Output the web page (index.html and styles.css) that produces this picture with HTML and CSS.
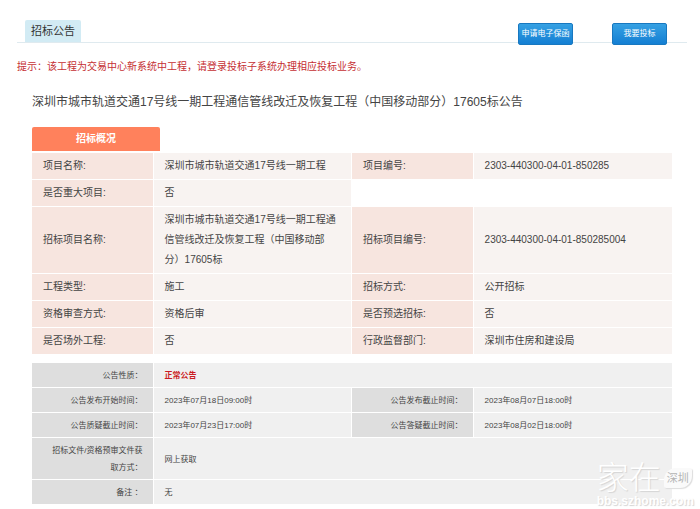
FILE: index.html
```html
<!DOCTYPE html>
<html lang="zh-CN">
<head>
<meta charset="utf-8">
<meta name="viewport" content="width=device-width, initial-scale=1">
<title>招标公告</title>
<link rel="stylesheet" href="styles.css">
</head>
<body>
<main class="page">
  <header class="bar">
    <h1 class="bar-title">招标公告</h1>
    <div class="actions">
      <button class="btn" type="button">申请电子保函</button>
      <button class="btn" type="button">我要投标</button>
    </div>
  </header>
  <p class="hint">提示：该工程为交易中心新系统中工程，请登录投标子系统办理相应投标业务。</p>
  <section class="notice">
    <h2 class="notice-title">深圳市城市轨道交通17号线一期工程通信管线改迁及恢复工程（中国移动部分）17605标公告</h2>
    <h3 class="tab">招标概况</h3>
    <table class="info overview">
      <colgroup><col class="c-label"><col class="c-value"><col class="c-label"><col class="c-value"></colgroup>
      <tbody>
        <tr><th scope="row">项目名称:</th><td>深圳市城市轨道交通17号线一期工程</td><th scope="row">项目编号:</th><td>2303-440300-04-01-850285</td></tr>
        <tr><th scope="row">是否重大项目:</th><td>否</td><td class="blank" colspan="2"></td></tr>
        <tr><th scope="row">招标项目名称:</th><td>深圳市城市轨道交通17号线一期工程通信管线改迁及恢复工程（中国移动部分）17605标</td><th scope="row">招标项目编号:</th><td>2303-440300-04-01-850285004</td></tr>
        <tr><th scope="row">工程类型:</th><td>施工</td><th scope="row">招标方式:</th><td>公开招标</td></tr>
        <tr><th scope="row">资格审查方式:</th><td>资格后审</td><th scope="row">是否预选招标:</th><td>否</td></tr>
        <tr><th scope="row">是否场外工程:</th><td>否</td><th scope="row">行政监督部门:</th><td>深圳市住房和建设局</td></tr>
      </tbody>
    </table>
    <table class="info schedule">
      <colgroup><col class="c-label"><col class="c-value"><col class="c-label"><col class="c-value"></colgroup>
      <tbody>
        <tr><th scope="row">公告性质：</th><td colspan="3"><strong class="status">正常公告</strong></td></tr>
        <tr><th scope="row">公告发布开始时间：</th><td>2023年07月18日09:00时</td><th scope="row">公告发布截止时间：</th><td>2023年08月07日18:00时</td></tr>
        <tr><th scope="row">公告质疑截止时间：</th><td>2023年07月23日17:00时</td><th scope="row">公告答疑截止时间：</th><td>2023年08月02日18:00时</td></tr>
        <tr><th scope="row">招标文件/资格预审文件获取方式：</th><td colspan="3">网上获取</td></tr>
        <tr><th scope="row">备注 ：</th><td colspan="3">无</td></tr>
      </tbody>
    </table>
  </section>
  <div class="watermark">
    <div class="mark-top"><span class="mark-name">家在</span><span class="mark-city">深圳</span></div>
    <div class="mark-url">bbs.szhome.com</div>
  </div>
</main>
</body>
</html>
```
FILE: styles.css
```css
* { box-sizing: border-box; }

body {
  margin: 0;
  background: #fff;
  color: #444;
  font-family: "Liberation Sans", "Noto Sans CJK SC", sans-serif;
  font-size: 10px;
  line-height: 20px;
}

h1, h2, h3, p { margin: 0; font-weight: normal; }

.page {
  position: relative;
  padding: 20px 13px 5px 17px;
}

.bar {
  display: flex;
  justify-content: space-between;
  align-items: flex-end;
  padding: 0 20px 0 8px;
  border-bottom: 1px solid #dfeaef;
}

.bar-title {
  padding: 1px 6px;
  border-radius: 2px 2px 0 0;
  background: #d2ebf4;
  color: #333;
  font-size: 11px;
}

/* The buttons hang over the rule under the bar. */
.actions {
  display: flex;
  gap: 39px;
  margin-bottom: -3px;
}

.btn {
  width: 55px;
  height: 22px;
  padding: 0;
  border: 1px solid #1878c0;
  border-radius: 2px;
  background: linear-gradient(#36a1e3, #147fd3);
  color: #fff;
  font: inherit;
  font-size: 8px;
  line-height: 20px;
  white-space: nowrap;
}

.hint {
  margin-top: 14px;
  color: #c52f33;
}

.notice { padding: 15px 15px 0; }

.notice-title { font-size: 12px; }

.tab {
  width: 20%;
  min-width: 80px;
  margin: 15px 0 2px;
  padding: 2px 0;
  border-radius: 2px 2px 0 0;
  background: #ff815c;
  color: #fff;
  font-size: 10px;
  font-weight: bold;
  text-align: center;
}

.info {
  width: 100%;
  table-layout: fixed;
  border-collapse: separate;
  border-spacing: 0;
}

.c-label { width: 19%; }
.c-value { width: 31%; }

.info th,
.info td {
  padding: 3px 15px 3px 11px;
  border: solid #fff;
  border-width: 0 1px 1px 0;
  text-align: left;
  vertical-align: middle;
  font-weight: normal;
}

.info td:last-child { border-right-width: 0; }

.overview th { background: #f7e5df; }
.overview td { background: #f8f3f1; }
.overview td.blank { background: #fff; }

.schedule {
  margin-top: 8px;
  font-size: 8px;
  line-height: 17px;
}

.schedule th,
.schedule td {
  padding-top: 4px;
  padding-bottom: 3px;
}

.schedule th {
  padding-right: 10px;
  padding-left: 18px;
  background: #dedede;
  text-align: right;
}

.schedule td { background: #f0f0f0; }

.status { color: #cb1b22; }

.watermark {
  position: absolute;
  right: 6px;
  bottom: 3px;
  color: #fff;
  text-shadow: 1px 1px 1px #d4d4d4;
}

.mark-top {
  display: flex;
  align-items: center;
  gap: 3px;
}

.mark-name {
  font-size: 32px;
  font-weight: 300;
  line-height: 34px;
}

.mark-city {
  padding: 0 3px;
  border-radius: 12px 2px 12px 2px;
  background: #fafafa;
  box-shadow: 1px 1px 1px #ddd;
  color: #b4b4b4;
  font-size: 11px;
  text-shadow: none;
}

.mark-url {
  font-size: 12px;
  font-weight: bold;
  line-height: 12px;
}
```
